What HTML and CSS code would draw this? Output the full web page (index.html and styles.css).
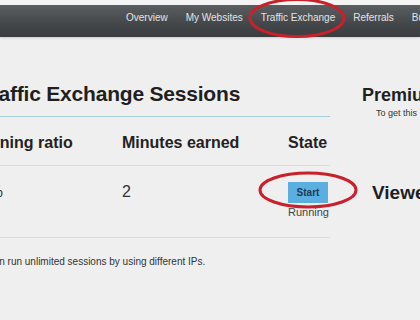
FILE: index.html
```html
<!DOCTYPE html>
<html>
<head>
<meta charset="utf-8">
<link rel="stylesheet" href="styles.css">
</head>
<body>
<div class="page">
  <div class="topstrip"></div>
  <nav class="nav">
    <a>Overview</a>
    <a>My Websites</a>
    <a>Traffic Exchange</a>
    <a>Referrals</a>
    <a>Buy Traffic</a>
  </nav>
  <main class="main">
    <section class="sessions">
      <h1 class="title">Traffic Exchange Sessions</h1>
      <div class="grid head">
        <div>Earning ratio</div>
        <div>Minutes earned</div>
        <div>State</div>
      </div>
      <div class="grid row">
        <div class="ratio">100%</div>
        <div>2</div>
        <div class="state">
          <button class="start">Start</button>
          <span class="running">Running</span>
        </div>
      </div>
      <p class="note">You can run unlimited sessions by using different IPs.</p>
    </section>
    <aside class="side">
      <h2 class="premium">Premium</h2>
      <p class="premium-sub">To get this</p>
      <h2 class="viewers">Viewers</h2>
    </aside>
  </main>
  <svg class="marks" width="420" height="320" viewBox="0 0 420 320">
    <ellipse cx="297" cy="18" rx="47" ry="18.5" fill="none" stroke="#c9202b" stroke-width="3"/>
    <ellipse cx="308" cy="190" rx="48" ry="17" fill="none" stroke="#c9202b" stroke-width="3"/>
  </svg>
</div>
</body>
</html>
```
FILE: styles.css
```css
html, body {
  margin: 0;
  padding: 0;
}
body {
  width: 420px;
  height: 320px;
  overflow: hidden;
  background: #efefef;
  font-family: "Liberation Sans", Arial, sans-serif;
  color: #222;
}
.page {
  position: relative;
  width: 420px;
  height: 320px;
  overflow: hidden;
}
.topstrip {
  height: 5px;
  background: #f4f4f4;
}
.nav {
  height: 32px;
  background: linear-gradient(#5b5e61, #44474a 60%, #3a3d40);
  display: flex;
  align-items: center;
  gap: 18px;
  padding-left: 126px;
  padding-bottom: 1px;
  box-sizing: border-box;
  white-space: nowrap;
  overflow: hidden;
  box-shadow: 0 1px 2px rgba(0,0,0,0.15);
}
.nav a {
  color: #e4e4e4;
  font-size: 10px;
  margin-top: -7px;
}
.main {
  display: flex;
  padding-top: 44px;
}
.sessions {
  width: 354px;
  margin-left: -24px;
  flex: none;
}
.title {
  margin: 0;
  padding-left: 3px;
  font-size: 21px;
  letter-spacing: -0.2px;
  line-height: 25px;
  font-weight: bold;
  color: #1f1f1f;
  padding-bottom: 10px;
  border-bottom: 1px solid #a6cddd;
}
.grid {
  display: grid;
  grid-template-columns: 148px 166px 40px;
  margin-left: -2px;
}
.head {
  font-size: 16px;
  font-weight: bold;
  line-height: 20px;
  padding: 16px 0 12px;
  border-bottom: 1px solid #dcdcdc;
  color: #222;
}
.row {
  font-size: 16px;
  line-height: 20px;
  padding: 16px 0 18px;
  border-bottom: 1px solid #dcdcdc;
  color: #333;
}
.ratio {
  margin-left: -12px;
}
.state {
  display: flex;
  flex-direction: column;
  align-items: flex-start;
}
.start {
  width: 40px;
  height: 21px;
  border: none;
  background: #5aafe0;
  color: #1d3b57;
  font-family: "Liberation Sans", Arial, sans-serif;
  font-size: 10px;
  font-weight: bold;
  padding: 0;
  margin-bottom: 3px;
}
.running {
  font-size: 11px;
  line-height: 13px;
  color: #444;
}
.note {
  margin: 18px 0 0 -7px;
  font-size: 10px;
  line-height: 12px;
  color: #333;
}
.side {
  margin-left: 32px;
  white-space: nowrap;
  flex: none;
}
.premium {
  margin: 4px 0 0;
  font-size: 18px;
  line-height: 21px;
  font-weight: bold;
  color: #1f1f1f;
}
.premium-sub {
  margin: 2px 0 0 14px;
  font-size: 9px;
  line-height: 11px;
  color: #333;
}
.viewers {
  margin: 63px 0 0 10px;
  font-size: 19px;
  line-height: 22px;
  font-weight: bold;
  color: #1f1f1f;
}
.marks {
  position: absolute;
  left: 0;
  top: 0;
  pointer-events: none;
}
```
